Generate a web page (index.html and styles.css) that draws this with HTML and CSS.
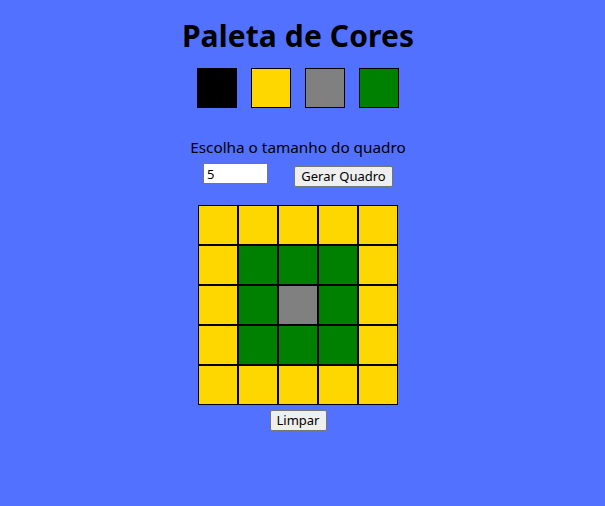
FILE: index.html
```html
<!DOCTYPE html>
<html lang="pt-BR">
<head>
<meta charset="utf-8">
<title>Paleta de Cores</title>
<link rel="stylesheet" href="styles.css">
</head>
<body>
<main class="page">
  <h1 class="title">Paleta de Cores</h1>
  <div class="palette">
    <div class="color black"></div>
    <div class="color yellow"></div>
    <div class="color gray"></div>
    <div class="color green"></div>
  </div>
  <p class="label">Escolha o tamanho do quadro</p>
  <div class="controls">
    <input class="size-input" type="text" value="5">
    <button class="btn gen">Gerar Quadro</button>
  </div>
  <div class="board">
    <div class="cell yellow"></div><div class="cell yellow"></div><div class="cell yellow"></div><div class="cell yellow"></div><div class="cell yellow"></div>
    <div class="cell yellow"></div><div class="cell green"></div><div class="cell green"></div><div class="cell green"></div><div class="cell yellow"></div>
    <div class="cell yellow"></div><div class="cell green"></div><div class="cell gray"></div><div class="cell green"></div><div class="cell yellow"></div>
    <div class="cell yellow"></div><div class="cell green"></div><div class="cell green"></div><div class="cell green"></div><div class="cell yellow"></div>
    <div class="cell yellow"></div><div class="cell yellow"></div><div class="cell yellow"></div><div class="cell yellow"></div><div class="cell yellow"></div>
  </div>
  <button class="btn clear">Limpar</button>
</main>
</body>
</html>
```
FILE: styles.css
```css
html, body {
  margin: 0;
  padding: 0;
}
body {
  background: #5271ff;
  font-family: "Noto Sans", "DejaVu Sans", sans-serif;
  color: #000;
  height: 506px;
}
.page {
  width: 596px;
  display: flex;
  flex-direction: column;
  align-items: center;
}
.title {
  margin: 14px 0 0;
  font-size: 30px;
  line-height: 44px;
  font-weight: 700;
  letter-spacing: 0.1px;
}
.palette {
  display: flex;
  gap: 14px;
  margin-top: 10px;
}
.color {
  width: 38px;
  height: 38px;
  border: 1px solid #000;
}
.black { background: #000; }
.yellow { background: #ffd700; }
.gray { background: #808080; }
.green { background: #008000; }
.label {
  margin: 28px 0 0;
  font-size: 15.3px;
  line-height: 22px;
}
.controls {
  display: flex;
  align-items: flex-start;
  gap: 26px;
  margin-top: 5px;
}
.size-input {
  box-sizing: border-box;
  width: 65px;
  height: 21px;
  margin: 0;
  padding: 0 3px;
  border: 1px solid #767676;
  font-family: "Noto Sans", sans-serif;
  font-size: 13px;
  background: #fff;
}
.btn {
  box-sizing: border-box;
  height: 21px;
  margin: 0;
  padding: 0;
  border: 1px solid #767676;
  border-radius: 2px;
  background: #efefef;
  font-family: "Noto Sans", sans-serif;
  font-size: 13px;
  line-height: 19px;
  color: #000;
  white-space: nowrap;
  text-align: center;
}
.gen {
  width: 99px;
  margin-top: 3px;
}
.board {
  display: grid;
  grid-template-columns: repeat(5, 40px);
  margin-top: 18px;
}
.cell {
  width: 38px;
  height: 38px;
  border: 1px solid #000;
}
.clear {
  width: 57px;
  margin-top: 5px;
}
```
